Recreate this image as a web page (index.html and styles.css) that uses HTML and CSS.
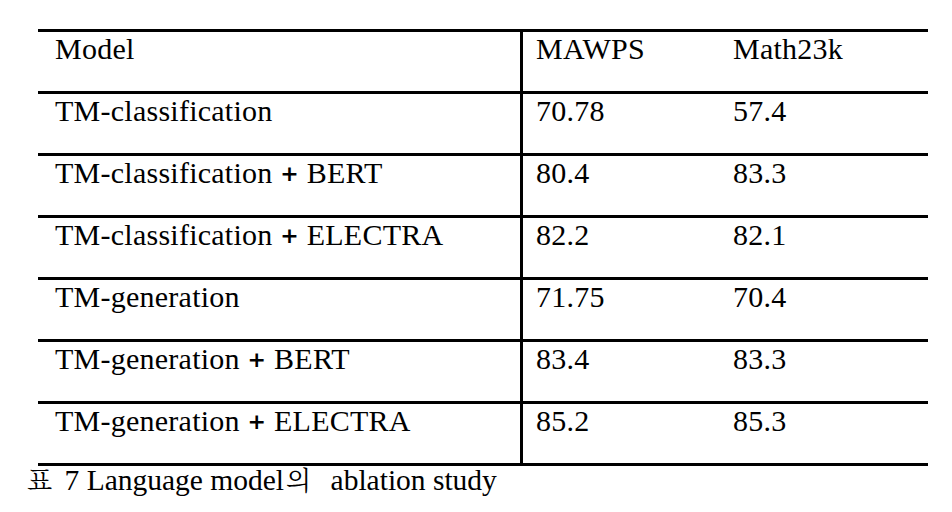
FILE: index.html
```html
<!DOCTYPE html>
<html lang="en">
<head>
<meta charset="utf-8">
<title>표 7 Language model의 ablation study</title>
<link rel="stylesheet" href="styles.css">
</head>
<body>
<figure class="figure">
  <table class="results">
    <tbody>
      <tr>
        <td class="cell c-model">Model</td>
        <td class="cell c-a">MAWPS</td>
        <td class="cell c-b">Math23k</td>
      </tr>
      <tr>
        <td class="cell c-model">TM-classification</td>
        <td class="cell c-a">70.78</td>
        <td class="cell c-b">57.4</td>
      </tr>
      <tr>
        <td class="cell c-model">TM-classification <span class="op">+</span> BERT</td>
        <td class="cell c-a">80.4</td>
        <td class="cell c-b">83.3</td>
      </tr>
      <tr>
        <td class="cell c-model">TM-classification <span class="op">+</span> ELECTRA</td>
        <td class="cell c-a">82.2</td>
        <td class="cell c-b">82.1</td>
      </tr>
      <tr>
        <td class="cell c-model">TM-generation</td>
        <td class="cell c-a">71.75</td>
        <td class="cell c-b">70.4</td>
      </tr>
      <tr>
        <td class="cell c-model">TM-generation <span class="op">+</span> BERT</td>
        <td class="cell c-a">83.4</td>
        <td class="cell c-b">83.3</td>
      </tr>
      <tr class="last">
        <td class="cell c-model">TM-generation <span class="op">+</span> ELECTRA</td>
        <td class="cell c-a">85.2</td>
        <td class="cell c-b">85.3</td>
      </tr>
    </tbody>
  </table>
  <figcaption class="caption"><span class="ko ko-first" lang="ko">표</span> 7 Language model<span class="ko ko-tail" lang="ko">의</span> ablation study</figcaption>
</figure>
</body>
</html>
```

FILE: styles.css
```css
html, body {
  margin: 0;
  padding: 0;
  background: #fff;
}

.figure {
  margin: 0;
  padding: 29px 0 0 27px;
  color: #000;
}

.results {
  border-collapse: separate;
  border-spacing: 0;
  margin-left: 11px;
  width: 890px;
  table-layout: fixed;
}

.cell {
  font-family: "Liberation Serif", serif;
  height: 59px;
  padding: 0;
  vertical-align: top;
  font-size: 30px;
  letter-spacing: 0.25px;
  line-height: normal;
  border-top: 3px solid #000;
  white-space: nowrap;
}

.last .cell {
  border-bottom: 3px solid #000;
}

.c-model {
  width: 465px;
  padding-left: 17px;
}

.c-a {
  width: 183px;
  border-left: 3px solid #000;
  padding-left: 13px;
}

.c-b {
  padding-left: 14px;
}

.op {
  font-family: "DejaVu Sans", sans-serif;
  font-weight: bold;
  font-size: 22px;
  position: relative;
  top: -2px;
}

.caption {
  font-family: "Liberation Serif", serif;
  font-size: 29.5px;
  line-height: 1;
  margin: 0;
  white-space: nowrap;
}

.ko {
  font-family: "Noto Serif CJK KR", serif;
  font-size: 26px;
}

.ko-first {
  margin-right: 5px;
}

.ko-tail {
  margin-left: 2px;
  margin-right: 12px;
}
```
